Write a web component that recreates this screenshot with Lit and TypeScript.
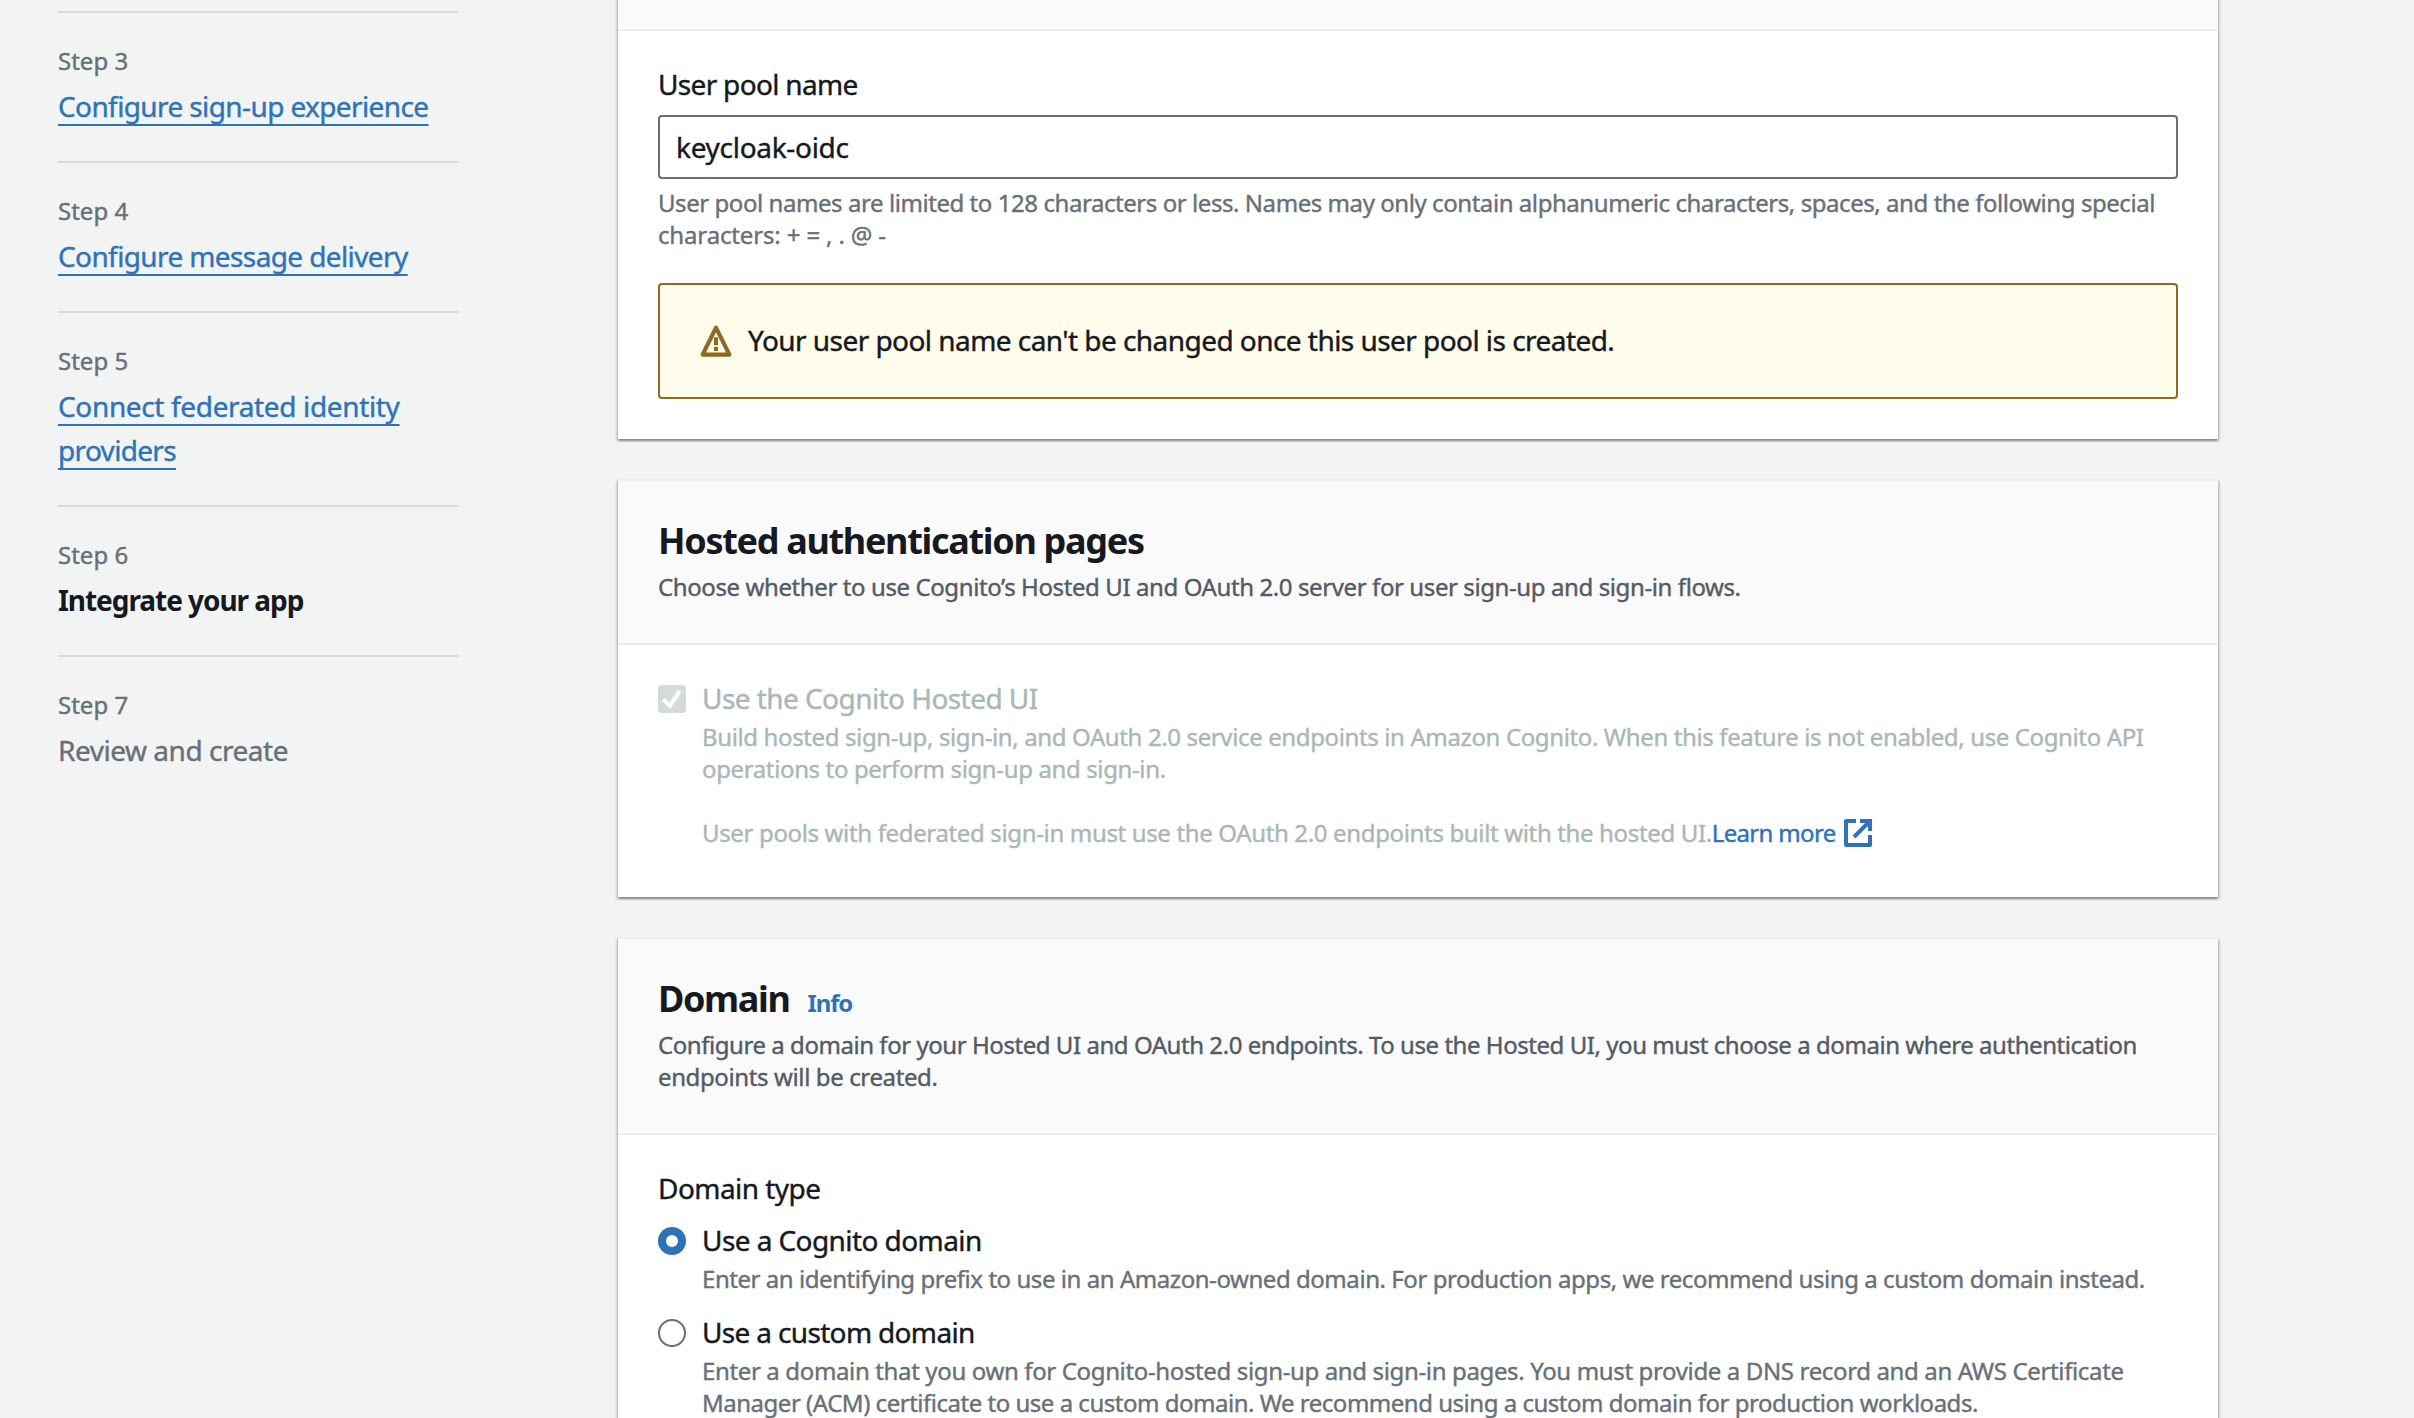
import { LitElement, html, css, svg, nothing } from 'lit';
import { customElement, property } from 'lit/decorators.js';
import { classMap } from 'lit/directives/class-map.js';
import { styleMap } from 'lit/directives/style-map.js';

interface Line {
  text: string;
  tracking: number;
}

interface Step {
  label: string;
  title: Line[];
  state: 'done' | 'current' | 'upcoming';
}

const line = (text: string, tracking: number): Line => ({ text, tracking });

const renderLine = (l: Line, cls = '') =>
  html`<span class=${cls} style=${styleMap({ letterSpacing: `${l.tracking}px` })}>${l.text}</span>`;

const renderLines = (lines: Line[]) => lines.map((l, i) => html`${i ? html`<br />` : nothing}${renderLine(l)}`);

const STEPS: Step[] = [
  { label: 'Step 3', title: [line('Configure sign-up experience', -0.609)], state: 'done' },
  { label: 'Step 4', title: [line('Configure message delivery', -0.61)], state: 'done' },
  {
    label: 'Step 5',
    title: [line('Connect federated identity', -0.353), line('providers', -0.671)],
    state: 'done',
  },
  { label: 'Step 6', title: [line('Integrate your app', -1.05)], state: 'current' },
  { label: 'Step 7', title: [line('Review and create', -0.47)], state: 'upcoming' },
];

@customElement('wizard-steps')
export class WizardSteps extends LitElement {
  static styles = css`
    :host {
      display: block;
      width: 400px;
      padding-top: 11px;
    }
    .step {
      border-top: 2px solid #d5dbdb;
      padding: 32px 0 33px;
      color: #687078;
    }
    .label {
      font-size: 24px;
      line-height: 32px;
      margin-bottom: 7px;
    }
    .title {
      font-size: 28px;
      line-height: 44px;
      white-space: nowrap;
    }
    .done {
      color: #2e73b8;
      text-decoration: underline 2px;
      text-underline-offset: 7px;
      text-decoration-skip-ink: none;
    }
    .current {
      color: #16191f;
      font-weight: 700;
      -webkit-text-stroke-width: 0;
    }
  `;

  render() {
    return STEPS.map(
      (s) => html`
        <div class="step">
          <div class="label">${s.label}</div>
          <div class=${classMap({ title: true, [s.state]: true })}>${renderLines(s.title)}</div>
        </div>
      `,
    );
  }
}

@customElement('content-card')
export class ContentCard extends LitElement {
  static styles = css`
    :host {
      display: block;
      background: #fff;
      box-shadow:
        0 2px 2px 0 rgba(0, 28, 36, 0.3),
        2px 2px 2px 0 rgba(0, 28, 36, 0.15),
        -2px 2px 2px 0 rgba(0, 28, 36, 0.15);
    }
    .head {
      background: #fafafa;
      border-top: 2px solid #eaeded;
      border-bottom: 2px solid #eaeded;
      padding: 38px 40px 40px;
    }
    .body {
      padding: 31px 40px 0;
    }
  `;

  render() {
    return html`
      <div class="head"><slot name="header"></slot></div>
      <div class="body"><slot></slot></div>
    `;
  }
}

@customElement('choice-row')
export class ChoiceRow extends LitElement {
  @property() kind: 'checkbox' | 'radio' = 'radio';
  @property({ type: Boolean }) checked = false;
  @property({ type: Boolean }) disabled = false;
  @property({ attribute: false }) label: Line = line('', 0);

  static styles = css`
    :host {
      display: flex;
      gap: 16px;
    }
    .mark {
      flex: none;
      width: 28px;
      height: 28px;
      margin-top: 9px;
    }
    .text {
      white-space: nowrap;
    }
    .label {
      color: #16191f;
      font-size: 28px;
      line-height: 44px;
    }
    .desc {
      color: #687078;
      font-size: 24px;
      line-height: 32px;
      margin-top: 1px;
    }
    .disabled .label,
    .disabled .desc {
      color: #aab7b8;
    }
  `;

  private mark() {
    if (this.kind === 'checkbox') {
      return svg`
        <rect width="28" height="28" rx="4" fill="#d5dbdb" />
        <path d="M5.2 14.3L11.8 20.6L21.8 6" fill="none" stroke="#fff" stroke-width="4" />`;
    }
    return this.checked
      ? svg`<circle cx="14" cy="14" r="14" fill="#2e73b8" /><circle cx="14" cy="14" r="6" fill="#fff" />`
      : svg`<circle cx="14" cy="14" r="13" fill="#fff" stroke="#687078" stroke-width="2" />`;
  }

  render() {
    return html`
      <svg class="mark" viewBox="0 0 28 28">${this.mark()}</svg>
      <div class=${classMap({ text: true, disabled: this.disabled })}>
        <div class="label">${renderLine(this.label)}</div>
        <div class="desc"><slot></slot></div>
      </div>
    `;
  }
}

@customElement('app-root')
export class AppRoot extends LitElement {
  static styles = css`
    :host {
      display: flex;
      box-sizing: border-box;
      height: 1418px;
      overflow: hidden;
      padding-left: 58px;
      gap: 160px;
      background: #f2f4f3;
      color: #16191f;
      font-family: 'Noto Sans', 'Open Sans', sans-serif;
      font-size: 28px;
      line-height: 44px;
      -webkit-text-stroke-width: 0.4px;
    }
    .main {
      display: flex;
      flex-direction: column;
      gap: 40px;
      width: 1600px;
      margin-top: -51px;
    }
    .main > * {
      flex: none;
    }
    .pool {
      padding-bottom: 40px;
    }
    .hosted {
      padding-bottom: 48px;
    }
    .domain {
      padding-bottom: 60px;
    }
    h2 {
      display: flex;
      align-items: baseline;
      margin: 0 0 8px;
      height: 44px;
      font-size: 36px;
      line-height: 44px;
      font-weight: 700;
      -webkit-text-stroke-width: 0;
    }
    .info {
      margin-left: 18px;
      color: #2e73b8;
      font-size: 24px;
    }
    .small {
      font-size: 24px;
      line-height: 32px;
      white-space: nowrap;
    }
    .intro {
      color: #545b64;
    }
    .hint {
      color: #687078;
      margin-top: 8px;
    }
    .field {
      box-sizing: border-box;
      height: 64px;
      margin-top: 9px;
      padding: 8px 16px;
      border: 2px solid #687078;
      border-radius: 4px;
      background: #fff;
    }
    .alert {
      display: flex;
      align-items: center;
      gap: 16px;
      box-sizing: border-box;
      height: 116px;
      margin-top: 32px;
      padding: 0 40px;
      border: 2px solid #8d6b22;
      border-radius: 4px;
      background: #fffceb;
      white-space: nowrap;
    }
    .notice {
      padding-bottom: 2px;
    }
    .warn {
      flex: none;
      width: 32px;
      height: 32px;
    }
    .link {
      color: #2e73b8;
    }
    .ext {
      width: 28px;
      height: 28px;
      margin-left: 8px;
      vertical-align: -5px;
    }
    .options {
      display: flex;
      flex-direction: column;
      gap: 15px;
      margin-top: 8px;
    }
  `;

  render() {
    return html`
      <wizard-steps></wizard-steps>
      <div class="main">
        <content-card class="pool">
          <div>
            <div class="label">${renderLine(line('User pool name', -0.68))}</div>
            <div class="field">${renderLine(line('keycloak-oidc', -0.3))}</div>
            <div class="small hint">
              ${renderLines([
                line(
                  'User pool names are limited to 128 characters or less. Names may only contain alphanumeric characters, spaces, and the following special',
                  -0.437,
                ),
                line('characters: + = , . @ -', -0.15),
              ])}
            </div>
            <div class="alert">
              <svg class="warn" viewBox="0 0 32 32">
                <path d="M16 2.6L29.4 29.6H2.6Z" fill="none" stroke="#8d6b22" stroke-width="4.2" stroke-linejoin="round" />
                <path d="M16 12.2V20.2M16 22V26" fill="none" stroke="#8d6b22" stroke-width="4" />
              </svg>
              <div class="notice">
                ${renderLine(line("Your user pool name can't be changed once this user pool is created.", -0.55))}
              </div>
            </div>
          </div>
        </content-card>

        <content-card class="hosted">
          <div slot="header">
            <h2>${renderLine(line('Hosted authentication pages', -1.31))}</h2>
            <div class="small intro">
              ${renderLine(
                line('Choose whether to use Cognito’s Hosted UI and OAuth 2.0 server for user sign-up and sign-in flows.', -0.4),
              )}
            </div>
          </div>
          <choice-row kind="checkbox" checked disabled .label=${line('Use the Cognito Hosted UI', -0.56)}>
            ${renderLines([
              line(
                'Build hosted sign-up, sign-in, and OAuth 2.0 service endpoints in Amazon Cognito. When this feature is not enabled, use Cognito API',
                -0.375,
              ),
              line('operations to perform sign-up and sign-in.', -0.37),
            ])}<br /><br />${renderLine(
              line('User pools with federated sign-in must use the OAuth 2.0 endpoints built with the hosted UI.', -0.35),
            )}${renderLine(line('Learn more', -0.68), 'link')}<svg class="ext" viewBox="0 0 28 28">
              <path
                d="M12 2H2V26H26V16"
                fill="none"
                stroke="#2e73b8"
                stroke-width="4"
                stroke-linejoin="round"
              />
              <path d="M16 2H26V12M25 3L10 18" fill="none" stroke="#2e73b8" stroke-width="4" />
            </svg>
          </choice-row>
        </content-card>

        <content-card class="domain">
          <div slot="header">
            <h2>${renderLine(line('Domain', -1.38))}${renderLine(line('Info', -1.1), 'info')}</h2>
            <div class="small intro">
              ${renderLines([
                line(
                  'Configure a domain for your Hosted UI and OAuth 2.0 endpoints. To use the Hosted UI, you must choose a domain where authentication',
                  -0.45,
                ),
                line('endpoints will be created.', -0.38),
              ])}
            </div>
          </div>
          <div class="label">${renderLine(line('Domain type', -0.55))}</div>
          <div class="options">
            <choice-row kind="radio" checked .label=${line('Use a Cognito domain', -0.58)}>
              ${renderLine(
                line(
                  'Enter an identifying prefix to use in an Amazon-owned domain. For production apps, we recommend using a custom domain instead.',
                  -0.446,
                ),
              )}
            </choice-row>
            <choice-row kind="radio" .label=${line('Use a custom domain', -0.66)}>
              ${renderLines([
                line(
                  'Enter a domain that you own for Cognito-hosted sign-up and sign-in pages. You must provide a DNS record and an AWS Certificate',
                  -0.36,
                ),
                line(
                  'Manager (ACM) certificate to use a custom domain. We recommend using a custom domain for production workloads.',
                  -0.485,
                ),
              ])}
            </choice-row>
          </div>
        </content-card>
      </div>
    `;
  }
}
